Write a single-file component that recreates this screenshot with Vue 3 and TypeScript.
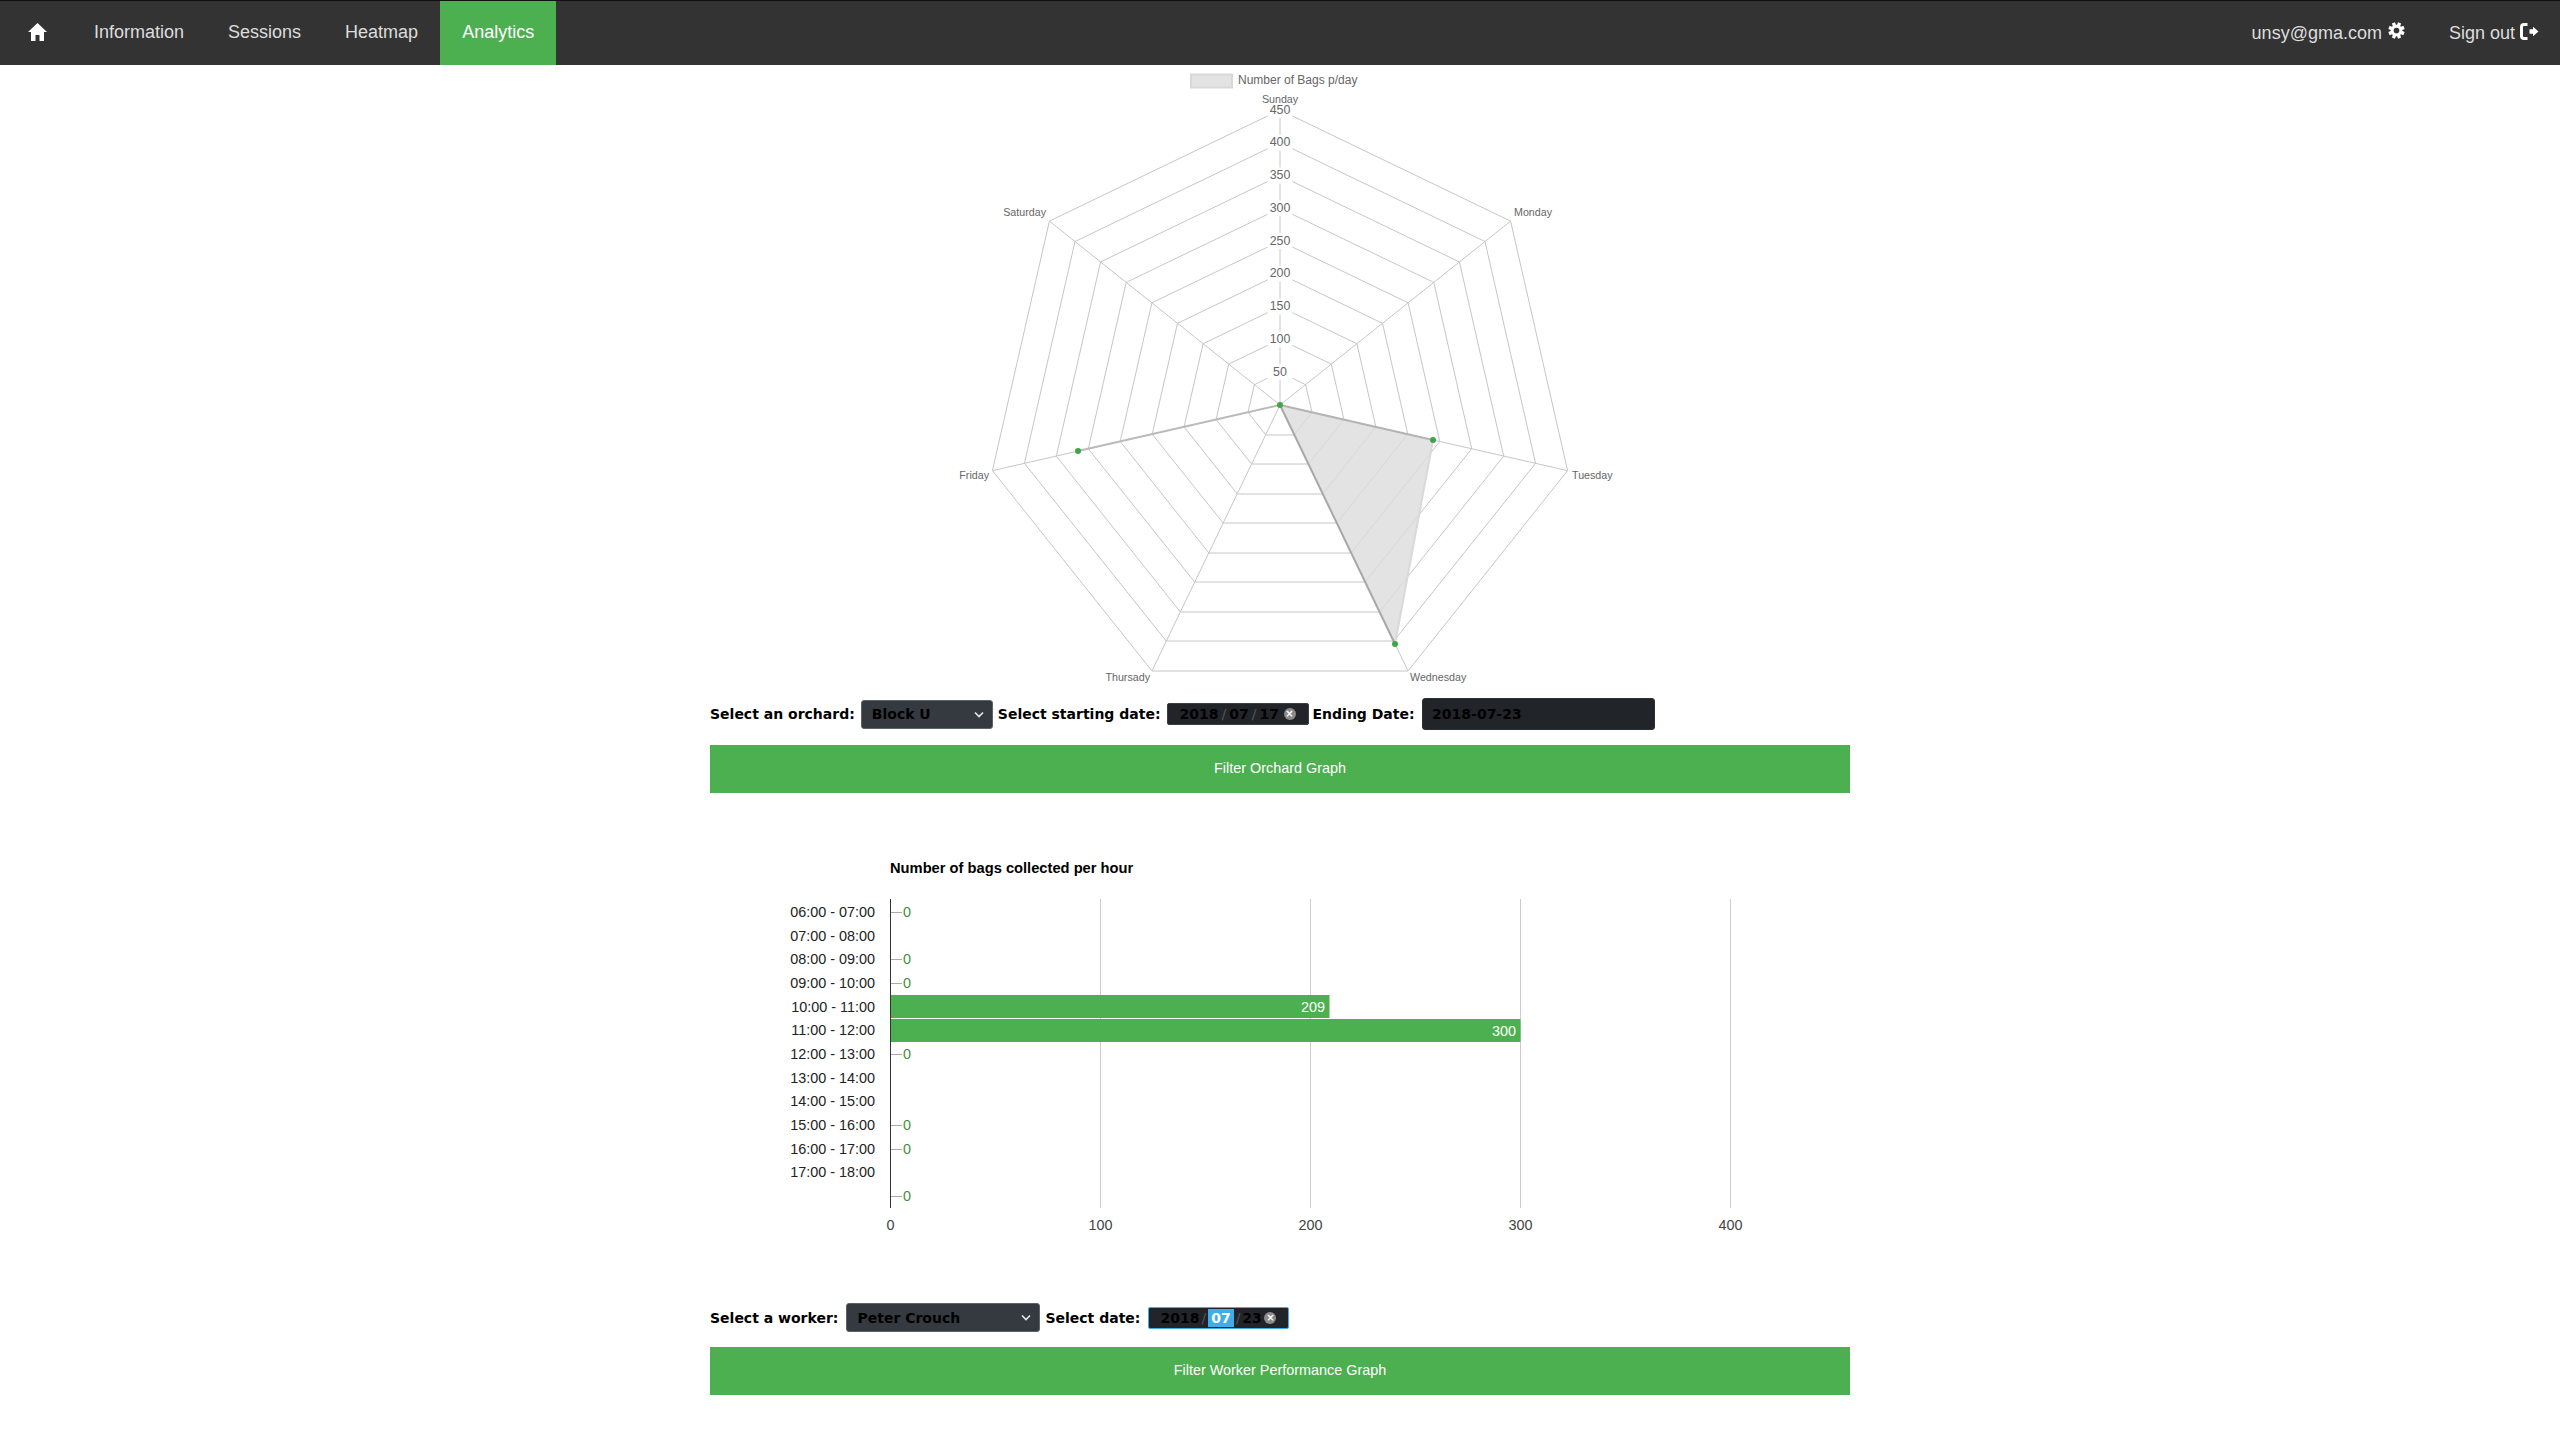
<template>
  <div class="page">
    <nav class="navbar">
      <a class="nav-link home-link">
        <svg class="home-icon" viewBox="0 0 19 18"><path d="M9.500 0 L19 9 H16 V18 H11.500 V12 H7.500 V18 H3 V9 H0 Z" /></svg>
      </a>
      <a v-for="item in navItems" :key="item" class="nav-link" :class="{ active: item === 'Analytics' }">{{ item }}</a>
      <div class="nav-right">
        <a class="nav-link">
          <span>unsy@gma.com</span>
          <svg class="gear-icon" viewBox="-9 -9 18 18"><path :d="gearPath" fill-rule="evenodd" /></svg>
        </a>
        <a class="nav-link">
          <span>Sign out</span>
          <svg class="signout-icon" viewBox="0 0 19 17"><path d="M7.500 0 H4 Q0 0 0 4 V13 Q0 17 4 17 H7.500 V14 H4 Q3 14 3 13 V4 Q3 3 4 3 H7.500 Z M9.500 6.300 H13 V3.700 L18.500 8.500 L13 13.300 V10.700 H9.500 Z" /></svg>
        </a>
      </div>
    </nav>

    <main class="container">
      <svg class="radar" viewBox="710 65 1140 633">
        <rect x="1191" y="74.500" width="41" height="13" fill="#e3e3e3" stroke="#d8d8d8" stroke-width="2" />
        <text x="1238" y="84" class="legend-text">Number of Bags p/day</text>

        <polygon v-for="ring in rings" :key="ring.value" :points="ring.points" fill="none" stroke="#c6c6c6" />
        <line v-for="s in spokes" :key="s.x" x1="1280" y1="405" :x2="s.x" :y2="s.y" stroke="#c6c6c6" />

        <template v-for="ring in rings" :key="'t' + ring.value">
          <rect x="1267.600" :y="ring.top - 8" width="24.800" height="16" fill="#fff" />
          <text x="1280" :y="ring.top + 3.500" class="tick-text" text-anchor="middle">{{ ring.value }}</text>
        </template>

        <polygon :points="fillPoints" fill="rgba(220,220,220,0.8)" />
        <line x1="1280" y1="405" x2="1433" y2="440" stroke="#b4b4b4" stroke-width="2" />
        <line x1="1433" y1="440" x2="1395" y2="644" stroke="#d9d9d9" stroke-width="2" />
        <line x1="1395" y1="644" x2="1280" y2="405" stroke="#a8a8a8" stroke-width="2" />
        <line x1="1280" y1="405" x2="1078" y2="451" stroke="#bbb" stroke-width="2" />
        <circle v-for="p in dataPoints" :key="p.x" :cx="p.x" :cy="p.y" r="3" fill="#3fa648" />

        <text v-for="l in dayLabels" :key="l.text" :x="l.x" :y="l.y" class="day-text" :text-anchor="l.anchor">{{ l.text }}</text>
      </svg>

      <form class="filter-row orchard-row" @submit.prevent>
        <label>Select an orchard:</label>
        <div class="select-wrap orchard-select">
          <select><option>Block U</option></select>
          <svg class="chevron" viewBox="0 0 10 7"><path d="M1 1.500 L5 5.500 L9 1.500" /></svg>
        </div>
        <label>Select starting date:</label>
        <div class="date-box start-date">
          <span>2018</span><i>/</i><span>07</span><i>/</i><span>17</span>
          <b class="clear">×</b>
        </div>
        <label>Ending Date:</label>
        <input class="end-date" type="text" value="2018-07-23" readonly />
      </form>
      <button class="filter-btn">Filter Orchard Graph</button>

      <svg class="bars" viewBox="710 793 1140 510">
        <text x="890" y="873" class="bars-title">Number of bags collected per hour</text>
        <line v-for="g in gridLines" :key="g.label" :x1="g.x" :x2="g.x" y1="899" y2="1208" stroke="#ccc" />
        <text v-for="g in gridLines" :key="'a' + g.label" :x="g.x" y="1230" class="axis-text" text-anchor="middle">{{ g.label }}</text>

        <text v-for="h in hours" :key="h.label" x="875" :y="h.y + 5" class="hour-text" text-anchor="end">{{ h.label }}</text>

        <template v-for="y in zeroRows" :key="y">
          <line x1="890" x2="902" :y1="y" :y2="y" stroke="#aaa" />
          <text x="903" :y="y + 4" class="zero-text">0</text>
        </template>

        <rect x="890" y="995" width="439.500" height="23" fill="#4caf50" />
        <rect x="890" y="1019" width="630.500" height="23" fill="#4caf50" />
        <text x="1325" y="1012" class="bar-text" text-anchor="end">209</text>
        <text x="1516" y="1036" class="bar-text" text-anchor="end">300</text>
        <line x1="890.500" x2="890.500" y1="899" y2="1208" stroke="#333" />
      </svg>

      <form class="filter-row worker-row" @submit.prevent>
        <label>Select a worker:</label>
        <div class="select-wrap worker-select">
          <select><option>Peter Crouch</option></select>
          <svg class="chevron" viewBox="0 0 10 7"><path d="M1 1.500 L5 5.500 L9 1.500" /></svg>
        </div>
        <label>Select date:</label>
        <div class="date-box worker-date">
          <span>2018</span><i>/</i><span class="picked">07</span><i>/</i><span>23</span>
          <b class="clear">×</b>
        </div>
      </form>
      <button class="filter-btn">Filter Worker Performance Graph</button>
    </main>
  </div>
</template>

<script setup lang="ts">
const navItems = ['Information', 'Sessions', 'Heatmap', 'Analytics'];

// eight teeth round a hole, like the cog in the icon font
const buildGear = () => {
  const parts: string[] = [];
  for (let i = 0; i < 8; i++) {
    const a = (i * Math.PI) / 4 + Math.PI / 8;
    const pts: [number, number][] = [
      [6.2, a - 0.3],
      [8.8, a - 0.2],
      [8.8, a + 0.2],
      [6.2, a + 0.3],
    ];
    for (const [r, t] of pts) {
      const cmd = parts.length === 0 ? 'M' : 'L';
      parts.push(`${cmd}${(r * Math.sin(t)).toFixed(2)} ${(-r * Math.cos(t)).toFixed(2)}`);
    }
  }
  return `${parts.join(' ')} Z M3 0 A3 3 0 1 0 -3 0 A3 3 0 1 0 3 0 Z`;
};
const gearPath = buildGear();

const CX = 1280;
const CY = 405;
const RADIUS = 295;
const STEP = RADIUS / 9;

const vertex = (i: number, r: number) => {
  const a = (i * 2 * Math.PI) / 7;
  return { x: CX + r * Math.sin(a), y: CY - r * Math.cos(a) };
};

// the two lowest corners sit on whole pixels so the flat edge blurs like the canvas one
const ringPoints = (r: number) =>
  [0, 1, 2, 3, 4, 5, 6]
    .map((i) => {
      const v = vertex(i, r);
      const y = i === 3 || i === 4 ? Math.round(v.y) : v.y;
      return `${v.x.toFixed(1)},${y.toFixed(1)}`;
    })
    .join(' ');

const rings = [1, 2, 3, 4, 5, 6, 7, 8, 9].map((k) => ({
  value: k * 50,
  top: CY - k * STEP,
  points: ringPoints(k * STEP),
}));

const spokes = [0, 1, 2, 3, 4, 5, 6].map((i) => vertex(i, RADIUS));

const fillPoints = '1280,405 1433,440 1395,644';
const dataPoints = [
  { x: 1280, y: 405 },
  { x: 1433, y: 440 },
  { x: 1395, y: 644 },
  { x: 1078, y: 451 },
];

const dayLabels = [
  { text: 'Sunday', x: 1280, y: 103, anchor: 'middle' },
  { text: 'Monday', x: 1514, y: 216, anchor: 'start' },
  { text: 'Tuesday', x: 1572, y: 479, anchor: 'start' },
  { text: 'Wednesday', x: 1410, y: 681, anchor: 'start' },
  { text: 'Thursady', x: 1150, y: 681, anchor: 'end' },
  { text: 'Friday', x: 989, y: 479, anchor: 'end' },
  { text: 'Saturday', x: 1046, y: 216, anchor: 'end' },
];

const gridLines = [
  { label: 0, x: 890.5 },
  { label: 100, x: 1100.5 },
  { label: 200, x: 1310.5 },
  { label: 300, x: 1520.5 },
  { label: 400, x: 1730.5 },
];

const rowY = (i: number) => Math.round(912 + i * 23.67);

const hours = [
  '06:00 - 07:00', '07:00 - 08:00', '08:00 - 09:00', '09:00 - 10:00',
  '10:00 - 11:00', '11:00 - 12:00', '12:00 - 13:00', '13:00 - 14:00',
  '14:00 - 15:00', '15:00 - 16:00', '16:00 - 17:00', '17:00 - 18:00',
].map((label, i) => ({ label, y: rowY(i) }));

const zeroRows = [0, 2, 3, 6, 9, 10, 12].map((i) => rowY(i) + 0.5);
</script>

<style>
html,
body {
  margin: 0;
  background: #fff;
}
</style>

<style scoped>
.page {
  font-family: "Liberation Sans", Arial, sans-serif;
}

.navbar {
  display: flex;
  height: 64px;
  background: #333;
  border-top: 1px solid #111;
}

.nav-link {
  display: flex;
  align-items: center;
  box-sizing: border-box;
  padding: 0 22px 2px;
  color: #ddd;
  font-size: 18px;
}

.nav-link.active {
  background: #4caf50;
  color: #fff;
}

.home-link {
  width: 72px;
  padding-left: 27.5px;
}

.home-icon {
  width: 19px;
  height: 18px;
  fill: #fff;
}

.nav-right {
  display: flex;
  margin-left: auto;
}

.nav-right .nav-link {
  padding-bottom: 0;
}

.gear-icon {
  width: 17px;
  height: 17px;
  margin-left: 6px;
  margin-bottom: 6px;
  fill: #fff;
}

.signout-icon {
  width: 19px;
  height: 17px;
  margin-left: 5px;
  margin-right: -1px;
  margin-bottom: 3px;
  fill: #fff;
}

.container {
  width: 1140px;
  margin: 0 auto;
}

.radar,
.bars {
  display: block;
  width: 1140px;
}

.radar {
  height: 633px;
}

.bars {
  height: 510px;
}

.legend-text {
  font-size: 12px;
  fill: #666;
}

.tick-text {
  font-size: 12.4px;
  fill: #666;
}

.day-text {
  font-size: 10.7px;
  fill: #666;
}

.filter-row {
  display: flex;
  align-items: center;
  font-family: "DejaVu Sans", sans-serif;
  font-size: 14px;
  font-weight: 700;
  color: #000;
}

.orchard-row {
  height: 32px;
}

.worker-row {
  height: 29px;
}

.filter-row label {
  margin-right: 6px;
}

.worker-row label {
  margin-right: 8px;
}

.select-wrap {
  position: relative;
  margin-right: 5px;
}

.select-wrap select {
  display: block;
  width: 100%;
  height: 29px;
  padding: 0 10px;
  appearance: none;
  background: #343a40;
  border: 1px solid #5c636a;
  border-radius: 3px;
  font: inherit;
  color: #000;
}

.orchard-select {
  width: 132px;
}

.worker-select {
  width: 194px;
}

.chevron {
  position: absolute;
  top: 11px;
  right: 9px;
  width: 10px;
  height: 7px;
  fill: none;
  stroke: #e8e8e8;
  stroke-width: 1.600;
}

.date-box {
  display: flex;
  align-items: center;
  box-sizing: border-box;
  height: 22px;
  padding-left: 12px;
  background: #212529;
  border: 1px solid #3a3f44;
  border-radius: 2px;
  margin-right: 4px;
  position: relative;
}

.date-box i {
  font-style: normal;
  font-weight: 400;
  color: #555;
  padding: 0 2px;
}

.start-date {
  width: 142px;
}

.start-date i {
  padding: 0 3px;
}

.worker-date {
  width: 141px;
  border-color: #3daee9;
  padding-left: 11px;
}

.picked {
  display: block;
  padding: 0 3px;
  line-height: 18px;
  background: #3daee9;
  color: #fff;
}

.clear {
  position: absolute;
  top: 4px;
  right: 12px;
  width: 12px;
  height: 12px;
  border-radius: 50%;
  background: #8a8a8a;
  color: #fff;
  font-size: 10px;
  line-height: 12px;
  text-align: center;
}

.end-date {
  box-sizing: border-box;
  width: 233px;
  height: 32px;
  margin-left: 1.5px;
  padding: 0 9px;
  background: #212529;
  border: 1px solid #2b3035;
  border-radius: 3px;
  font: inherit;
  color: #000;
}

.filter-btn {
  display: block;
  width: 100%;
  height: 48px;
  margin-top: 15px;
  padding: 0 0 2px;
  background: #4caf50;
  border: 0;
  color: #fff;
  font-family: "Liberation Sans", Arial, sans-serif;
  font-size: 14.4px;
}

.bars-title {
  font-size: 14.7px;
  font-weight: 700;
  fill: #000;
}

.hour-text {
  font-size: 14.4px;
  fill: #222;
}

.axis-text {
  font-size: 14.4px;
  fill: #444;
}

.zero-text {
  font-size: 14.4px;
  fill: #3f8f3f;
}

.bar-text {
  font-size: 14.4px;
  fill: #fff;
}
</style>
